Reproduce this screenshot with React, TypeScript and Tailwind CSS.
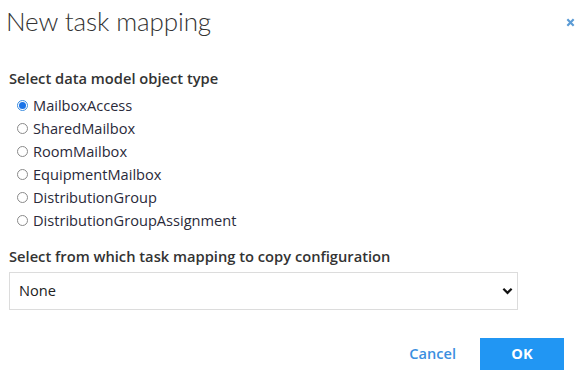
import { useState } from "react";

const types = [
  "MailboxAccess",
  "SharedMailbox",
  "RoomMailbox",
  "EquipmentMailbox",
  "DistributionGroup",
  "DistributionGroupAssignment",
];

export default function App() {
  const [selected, setSelected] = useState("MailboxAccess");

  return (
    <div
      className="w-[581px] h-[377px] bg-white text-[#333] relative overflow-hidden"
      style={{ fontFamily: '"Open Sans", "Liberation Sans", sans-serif' }}
    >
      <div className="flex items-center justify-between pl-[6px] pr-[6px] pt-[2px] h-[40px]">
        <h1
          className="text-[26px] font-light text-[#333] tracking-[-0.1px]"
          style={{ fontFamily: 'Lato, "Open Sans", sans-serif' }}
        >
          New task mapping
        </h1>
        <button className="text-[#5b9bd5] mt-[3px]">
          <svg width="9" height="9" viewBox="0 0 10 10">
            <path d="M1.5 1.5 L8.5 8.5 M8.5 1.5 L1.5 8.5" stroke="currentColor" strokeWidth="2.4" />
          </svg>
        </button>
      </div>

      <div className="px-[9px] pt-[28px]">
        <div className="text-[14.7px] font-semibold leading-[20px] text-[#333]">
          Select data model object type
        </div>
        <div className="flex flex-col pl-[8px] pt-[6px]">
          {types.map((t) => (
            <label
              key={t}
              className="flex items-center gap-[5px] h-[23px] text-[14.6px] text-[#2a2a3a] cursor-pointer"
              onClick={() => setSelected(t)}
            >
              {selected === t ? (
                <span className="w-[11px] h-[11px] rounded-full border border-[#3b8de0] bg-white flex items-center justify-center">
                  <span className="w-[7px] h-[7px] rounded-full bg-[#1a73e8]" />
                </span>
              ) : (
                <span className="w-[11px] h-[11px] rounded-full border border-[#8a8a8a] bg-white" />
              )}
              {t}
            </label>
          ))}
        </div>

        <div className="text-[14.7px] font-semibold leading-[20px] text-[#333] mt-[14px]">
          Select from which task mapping to copy configuration
        </div>
        <div className="mt-[6px] w-[509px] h-[38px] border border-[#dcdcdc] flex items-center justify-between pl-[9px] pr-[4px] text-[14.6px] text-[#222]">
          <span>None</span>
          <svg width="11" height="8" viewBox="0 0 12 8">
            <path d="M1.5 1.5 L6 6 L10.5 1.5" fill="none" stroke="#111" strokeWidth="2.4" />
          </svg>
        </div>
      </div>

      <div className="flex justify-end items-center pr-[17px] mt-[28px] gap-[24px]">
        <button className="text-[14.6px] font-semibold text-[#3b8fe0]">Cancel</button>
        <button className="w-[84px] h-[32px] bg-[#2196f3] text-white text-[14.6px] font-bold">
          OK
        </button>
      </div>
    </div>
  );
}
